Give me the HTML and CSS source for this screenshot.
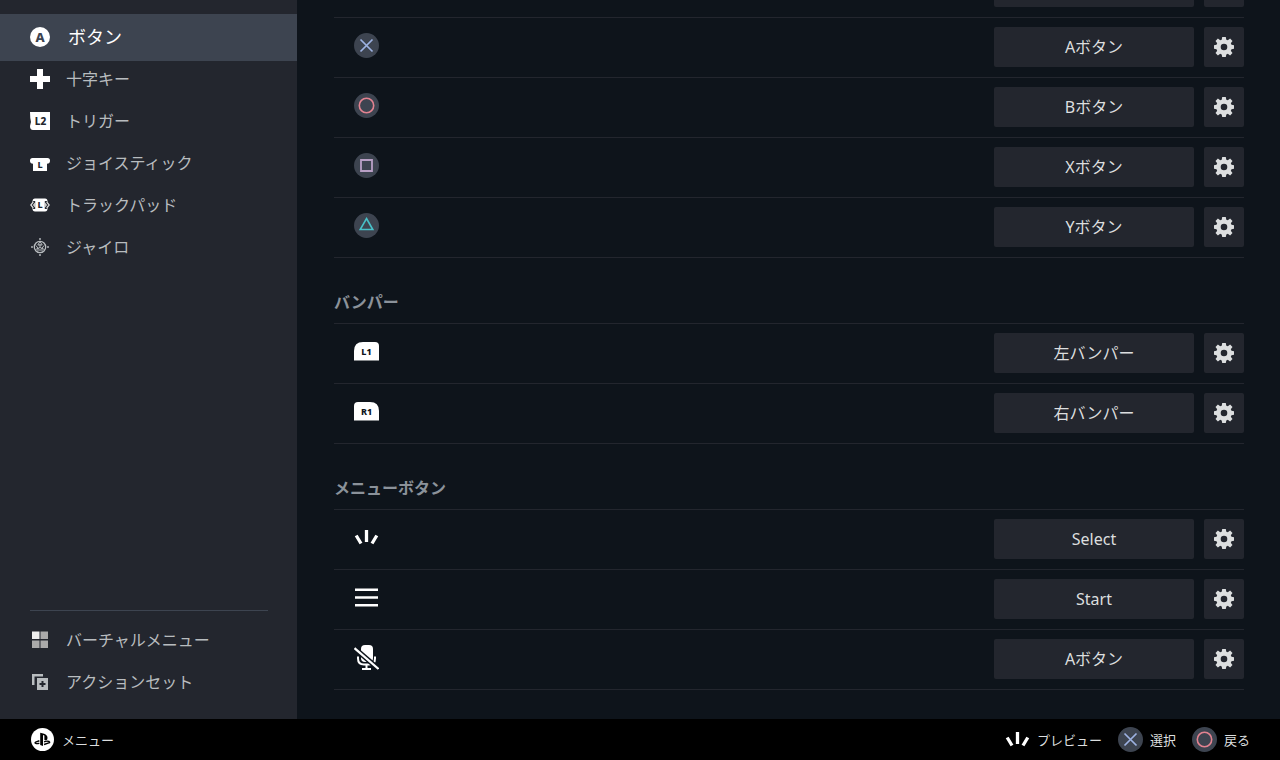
FILE: index.html
```html
<!DOCTYPE html>
<html lang="ja">
<head>
  <meta charset="UTF-8">
  <meta name="viewport" content="width=device-width, initial-scale=1.0">
  <title>コントローラ設定</title>
  <link rel="stylesheet" href="styles.css">
</head>
<body>
  <!-- Shared icons -->
  <svg class="sprite" aria-hidden="true">
    <symbol id="gear" viewBox="0 0 20 20">
      <path fill="currentColor" fill-rule="evenodd" d="M8.2 0h3.6l.5 2.7 1.5.6L16.1 1.600l2.400 2.400-1.700 2.200.7 1.500 2.500.5v3.600l-2.500.5-.7 1.500 1.700 2.200-2.400 2.400-2.300-1.600-1.500.6-.5 2.600H8.200l-.5-2.600-1.500-.6-2.300 1.600-2.400-2.400 1.700-2.200-.7-1.500L0 11.800V8.200l2.500-.5.7-1.500L1.500 4l2.400-2.400 2.300 1.700 1.500-.6zM10 6.700a3.300 3.300 0 1 0 0 6.600 3.300 3.300 0 0 0 0-6.600z"/>
    </symbol>
    <symbol id="cross" viewBox="0 0 25 25">
      <circle cx="12.500" cy="12.500" r="12.500" fill="#3d4450"/>
      <path d="M6.500 6.500l12 12M18.500 6.500l-12 12" stroke="#9db2e2" stroke-width="1.700" fill="none"/>
    </symbol>
    <symbol id="circle" viewBox="0 0 25 25">
      <circle cx="12.500" cy="12.500" r="12.500" fill="#3d4450"/>
      <circle cx="12.500" cy="12.500" r="7.200" stroke="#e38391" stroke-width="1.600" fill="none"/>
    </symbol>
    <symbol id="square" viewBox="0 0 25 25">
      <circle cx="12.500" cy="12.500" r="12.500" fill="#3d4450"/>
      <path d="M7 7h11v11H7z" stroke="#b9a0c6" stroke-width="1.800" fill="none"/>
    </symbol>
    <symbol id="triangle" viewBox="0 0 25 25">
      <circle cx="12.500" cy="12.500" r="12.500" fill="#3d4450"/>
      <path d="M12.500 5.500l6.300 11H6.200z" stroke="#48c0c8" stroke-width="1.600" fill="none"/>
    </symbol>
    <symbol id="create" viewBox="0 0 25 25">
      <path d="M12.500 5v12M2.200 10.500l4.800 8M22.800 10.500l-4.800 8" stroke="#fff" stroke-width="3.300" fill="none"/>
    </symbol>
  </svg>

  <div class="app">
    <nav class="sidebar">
      <button class="nav-item active">
        <svg class="nav-icon" viewBox="0 0 20 20"><circle cx="10" cy="10" r="10" fill="#fff"/><text class="glyph glyph-active" x="10" y="14.500" font-size="13">A</text></svg>
        ボタン
      </button>
      <button class="nav-item">
        <svg class="nav-icon" viewBox="0 0 20 20"><path fill="#fff" d="M7 0h6v7h7v6h-7v7H7v-7H0V7h7z"/></svg>
        十字キー
      </button>
      <button class="nav-item">
        <svg class="nav-icon" viewBox="0 0 20 20"><path fill="#fff" d="M0 1h20v18H3Q0 19 0 15l1-4Q0 7 0 1z"/><text class="glyph" x="10.500" y="13.800" font-size="10">L2</text></svg>
        トリガー
      </button>
      <button class="nav-item">
        <svg class="nav-icon" viewBox="0 0 20 20"><path fill="#fff" d="M2.500 5h15Q20 5 20 7.500V8q0 2.500-3 2.700V18H3v-7.300Q0 10.500 0 8v-.5Q0 5 2.500 5z"/><text class="glyph" x="10" y="15" font-size="9">L</text></svg>
        ジョイスティック
      </button>
      <button class="nav-item">
        <svg class="nav-icon" viewBox="0 0 20 20"><path fill="#fff" d="M5 3.500h10q2.500 0 2.500 3v7q0 3-2.500 3H5q-2.500 0-2.500-3v-7q0-3 2.500-3z"/><path fill="#23262e" d="M3.500 6L0 10l3.500 4h1.700V6zM16.500 6l3.500 4-3.500 4h-1.700V6z"/><path d="M3.300 7L.8 10l2.500 3M5.500 8L3.700 10l1.800 2M16.700 7l2.500 3-2.500 3M14.500 8l1.800 2-1.800 2" fill="none" stroke="#ddd" stroke-width="1.200"/><text class="glyph" x="10" y="13.200" font-size="9">L</text></svg>
        トラックパッド
      </button>
      <button class="nav-item">
        <svg class="nav-icon" viewBox="0 0 20 20"><g fill="none" stroke="#b8bcbf"><circle cx="10" cy="10" r="5.700" stroke-width="1.300"/><path d="M10 4.500L7.800 8h4.400zM10 7v3.500M10 10.500l-4.500 2M10 10.500l4.500 2M6 8.500l2.500 3.500M14 8.500L11.500 12M7 13h6"/></g><path fill="#8b8f94" d="M9 1h2v2H9zM9 17h2v2H9zM1 9h2v2H1zM17 9h2v2h-2z"/></svg>
        ジャイロ
      </button>

      <div class="nav-extra">
        <button class="nav-item">
          <svg class="nav-icon" viewBox="0 0 20 20"><path fill="#eee" d="M2 1.500h7.500V9H2z"/><path fill="#aaa" d="M10.500 1.500H18V9h-7.500zM2 10.500h7.500V18H2zM10.500 10.500H18V18h-7.500z"/></svg>
          バーチャルメニュー
        </button>
        <button class="nav-item">
          <svg class="nav-icon" viewBox="0 0 20 20"><path fill="#b8bcbf" d="M2 2h11v2.500H4.500V13H2z"/><path fill="#b8bcbf" fill-rule="evenodd" d="M7 6h11v12H7zM11.500 9v2H9.500v2h2v2h2v-2h2v-2h-2V9z"/></svg>
          アクションセット
        </button>
      </div>
    </nav>

    <main class="content">
      <ul class="bindings">
        <li class="binding">
          <button class="bind-btn" aria-label="割り当て"></button>
          <button class="gear-btn" aria-label="設定"></button>
        </li>
        <li class="binding">
          <svg class="source"><use href="#cross"/></svg>
          <button class="bind-btn">Aボタン</button>
          <button class="gear-btn" aria-label="設定"><svg><use href="#gear"/></svg></button>
        </li>
        <li class="binding">
          <svg class="source"><use href="#circle"/></svg>
          <button class="bind-btn">Bボタン</button>
          <button class="gear-btn" aria-label="設定"><svg><use href="#gear"/></svg></button>
        </li>
        <li class="binding">
          <svg class="source"><use href="#square"/></svg>
          <button class="bind-btn">Xボタン</button>
          <button class="gear-btn" aria-label="設定"><svg><use href="#gear"/></svg></button>
        </li>
        <li class="binding">
          <svg class="source"><use href="#triangle"/></svg>
          <button class="bind-btn">Yボタン</button>
          <button class="gear-btn" aria-label="設定"><svg><use href="#gear"/></svg></button>
        </li>
      </ul>

      <h2>バンパー</h2>
      <ul class="bindings">
        <li class="binding">
          <svg class="source" viewBox="0 0 25 25"><path fill="#fff" d="M9 3h12q4 0 4 4v14.500H0V12q0-9 9-9z"/><text class="glyph glyph-dark" x="12.500" y="15.500" font-size="9">L1</text></svg>
          <button class="bind-btn">左バンパー</button>
          <button class="gear-btn" aria-label="設定"><svg><use href="#gear"/></svg></button>
        </li>
        <li class="binding">
          <svg class="source" viewBox="0 0 25 25"><path fill="#fff" d="M4 3h12q9 0 9 9v9.500H0V7q0-4 4-4z"/><text class="glyph glyph-dark" x="12.500" y="15.500" font-size="9">R1</text></svg>
          <button class="bind-btn">右バンパー</button>
          <button class="gear-btn" aria-label="設定"><svg><use href="#gear"/></svg></button>
        </li>
      </ul>

      <h2>メニューボタン</h2>
      <ul class="bindings">
        <li class="binding">
          <svg class="source"><use href="#create"/></svg>
          <button class="bind-btn">Select</button>
          <button class="gear-btn" aria-label="設定"><svg><use href="#gear"/></svg></button>
        </li>
        <li class="binding">
          <svg class="source" viewBox="0 0 25 25"><path fill="#fff" d="M1 3.500h23V6H1zM1 11.300h23v2.400H1zM1 19h23v2.500H1z"/></svg>
          <button class="bind-btn">Start</button>
          <button class="gear-btn" aria-label="設定"><svg><use href="#gear"/></svg></button>
        </li>
        <li class="binding">
          <svg class="source" viewBox="0 0 25 25"><rect x="7" y="0" width="12" height="17" rx="4" fill="#fff"/><path d="M4 11.500v2q0 6 6 6h5q6 0 6-6v-2M12.500 19v5M8 24h9" fill="none" stroke="#fff" stroke-width="2"/><path d="M2 4.500l22 19" stroke="#0e141b" stroke-width="5"/><path d="M.5 3.200l24 20.800" stroke="#fff" stroke-width="2.200"/></svg>
          <button class="bind-btn">Aボタン</button>
          <button class="gear-btn" aria-label="設定"><svg><use href="#gear"/></svg></button>
        </li>
      </ul>
    </main>
  </div>

  <footer class="footer">
    <button class="hint hint-menu">
      <svg class="menu-icon" viewBox="0 0 22 22"><circle cx="11" cy="11" r="11" fill="#fff"/><path fill="#000" d="M8.800 4.500l3.700 1q3.300 1.200 3.300 4 0 3.200-3 2V7.800q0-1-.7-1-.6 0-.6 1v9.400l-2.700-.9z"/><path d="M8 12.200l-3.500 1.300q-1.500 1 .5 1.400 1.500.2 3-.5M12.500 13.200q2.500-1 4.800-.3 1.300.8-.3 1.400l-4.500 1.500" fill="none" stroke="#000" stroke-width="1.300"/></svg>
      メニュー
    </button>
    <button class="hint"><svg class="hint-icon"><use href="#create"/></svg>プレビュー</button>
    <button class="hint"><svg class="hint-icon"><use href="#cross"/></svg>選択</button>
    <button class="hint"><svg class="hint-icon"><use href="#circle"/></svg>戻る</button>
  </footer>
</body>
</html>
```
FILE: styles.css
```css
* {
  box-sizing: border-box;
}

body {
  margin: 0;
  height: 100vh;
  display: flex;
  flex-direction: column;
  overflow: hidden;
  background-color: #0e141b;
  color: #dcdedf;
  font-family: "Noto Sans", "Noto Sans CJK JP", sans-serif;
  font-size: 16px;
}

button {
  border: 0;
  padding: 0;
  background: none;
  color: inherit;
  font: inherit;
  cursor: pointer;
}

svg {
  flex: none;
}

.sprite {
  display: none;
}

.glyph {
  font-family: "Noto Sans", sans-serif;
  font-weight: 800;
  text-anchor: middle;
  fill: #23262e;
}

.glyph-active {
  fill: #3d4450;
}

.glyph-dark {
  fill: #0e141b;
}

.app {
  flex: 1;
  min-height: 0;
  display: flex;
}

/* Sidebar */
.sidebar {
  width: 297px;
  flex: none;
  display: flex;
  flex-direction: column;
  padding: 14px 0 13px;
  background-color: #23262e;
}

.nav-item {
  display: flex;
  align-items: center;
  gap: 16px;
  width: 100%;
  height: 36px;
  margin-bottom: 6px;
  padding: 0 30px;
  color: #b8bcbf;
  line-height: 24px;
  text-align: left;
}

.nav-item.active {
  gap: 18px;
  height: 47px;
  margin-bottom: 0;
  padding-bottom: 2px;
  background-color: #3d4450;
  color: #fff;
  font-size: 18px;
}

.nav-icon {
  width: 20px;
  height: 20px;
}

.nav-extra {
  margin: auto 29px 0 30px;
  padding-top: 11px;
  border-top: 1px solid #3d4450;
}

.nav-extra .nav-item {
  padding: 0;
}

/* Bindings */
.content {
  flex: 1;
  display: flex;
  flex-direction: column;
  justify-content: flex-end;
  overflow: hidden;
  padding: 0 36px 29px 37px;
}

.content h2 {
  margin: 0;
  padding: 32px 0 9px;
  color: #8b929a;
  font-size: 16px;
  font-weight: 700;
  line-height: 24px;
}

.bindings {
  list-style: none;
  margin: 0;
  padding: 0;
  border-top: 1px solid #23262e;
}

.binding {
  display: flex;
  justify-content: flex-end;
  gap: 10px;
  height: 60px;
  padding: 9px 0 10px 20px;
  border-bottom: 1px solid #23262e;
}

.source {
  width: 25px;
  height: 25px;
  margin: 6px auto 0 0;
}

.bind-btn {
  width: 200px;
  height: 40px;
  border-radius: 2px;
  background-color: #23262e;
  line-height: 24px;
}

.gear-btn {
  display: flex;
  align-items: center;
  justify-content: center;
  width: 40px;
  height: 40px;
  border-radius: 2px;
  background-color: #23262e;
}

.gear-btn svg {
  width: 20px;
  height: 20px;
}

/* Footer */
.footer {
  display: flex;
  align-items: center;
  gap: 16px;
  height: 41px;
  padding: 0 30px;
  background-color: #000;
}

.hint {
  display: flex;
  align-items: center;
  gap: 7px;
  font-size: 13px;
  line-height: 18px;
}

.hint-menu {
  margin-right: auto;
}

.menu-icon {
  width: 25px;
  height: 23px;
}

.hint-icon {
  width: 25px;
  height: 25px;
}
```
